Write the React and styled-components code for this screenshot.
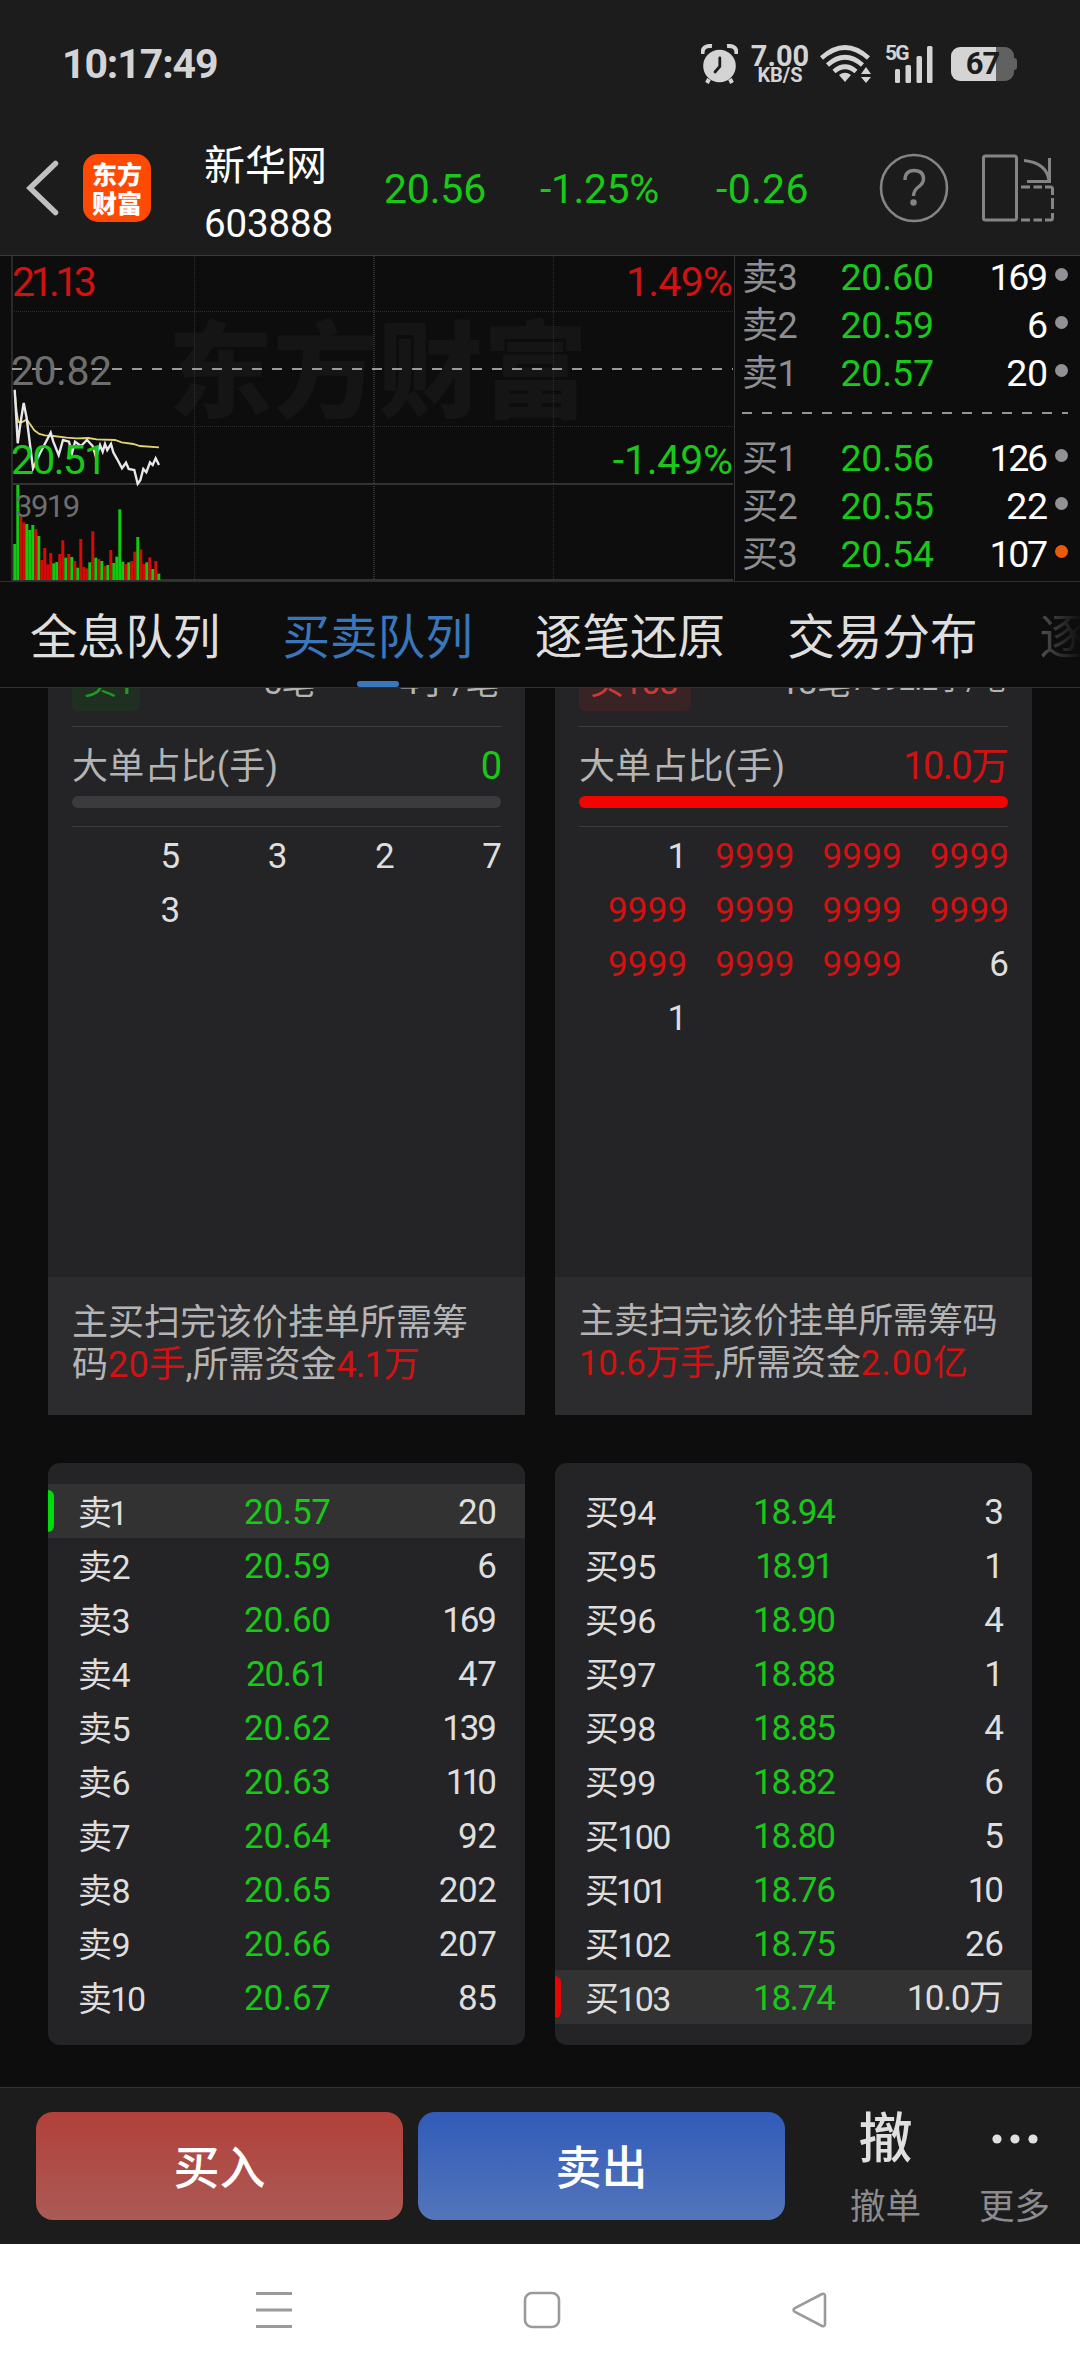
import React from "react";
import styled, { createGlobalStyle } from "styled-components";

const FONT = `Roboto, "Noto Sans CJK SC", sans-serif`;
const GREEN = "#19c819";
const RED = "#d01212";

const Global = createGlobalStyle`
  *, *::before, *::after { box-sizing: border-box; }
  html, body { margin: 0; padding: 0; background: #0d0d0d; }
  body { font-family: ${FONT}; color: #dedede; overflow: hidden; }
  #root { width: 1080px; }
`;

/* The narrow "1" of tabular figures is compensated by tighter tracking. */
const tracking = (text, size, extra = 0) => {
  const s = String(text);
  const ones = s.length > 1 ? (s.match(/1/g) || []).length : 0;
  return Number((-0.012 * size - (ones * size * 0.15) / s.length + extra).toFixed(2));
};

const NumText = styled.span`
  font-size: ${(p) => p.$size}px;
  line-height: 1.2;
  letter-spacing: ${(p) => p.$ls}px;
  margin-right: ${(p) => -p.$ls - 3}px;
  color: ${(p) => p.$color || "inherit"};
  white-space: nowrap;
`;
const Num = ({ size, color, extra, children }) => (
  <NumText $size={size} $color={color} $ls={tracking(children, size, extra)}>
    {children}
  </NumText>
);

const Screen = styled.div`
  width: 1080px;
  height: 2376px;
  display: flex;
  flex-direction: column;
  overflow: hidden;
  background: #0d0d0d;
`;

/* ---------- status bar ---------- */
const StatusBar = styled.div`
  height: 124px;
  flex: none;
  display: flex;
  align-items: center;
  justify-content: space-between;
  padding: 4px 66px 0 62px;
  background: #1c1c1c;
`;
const Clock = styled.div`
  font-size: 41px;
  line-height: 48px;
  font-weight: 700;
  letter-spacing: -1.1px;
  color: #d4d4d4;
`;
const StatusIcons = styled.div`
  display: flex;
  align-items: center;
  height: 40px;
`;
const Speed = styled.div`
  width: 58px;
  margin: 0 11px 0 13px;
  display: flex;
  flex-direction: column;
  align-items: center;
  color: #d4d4d4;
  font-weight: 700;
`;
const SpeedValue = styled.span`
  font-size: 29px;
  line-height: 22px;
`;
const SpeedUnit = styled.span`
  font-size: 20px;
  line-height: 16px;
`;
const Signal = styled.div`
  position: relative;
  width: 50px;
  height: 38px;
  margin: 0 16px 0 13px;
`;
const NetType = styled.span`
  position: absolute;
  left: 0;
  top: -1px;
  font-size: 21px;
  line-height: 18px;
  font-weight: 700;
  letter-spacing: -1.8px;
  color: #d4d4d4;
`;
const Battery = styled.div`
  width: 63px;
  height: 34px;
  border-radius: 9px;
  display: flex;
  align-items: center;
  justify-content: center;
  position: relative;
  background: linear-gradient(90deg, #d4d4d4 45px, #616161 45px);
  color: #1c1c1c;
  font-size: 31px;
  line-height: 34px;
  font-weight: 700;
  letter-spacing: -1px;
  &::after {
    content: "";
    position: absolute;
    right: -3px;
    top: 11px;
    width: 3px;
    height: 12px;
    border-radius: 0 3px 3px 0;
    background: #616161;
  }
`;

const AlarmIcon = () => (
  <svg width="37" height="40" viewBox="0 0 37 40">
    <path d="M1.5 10 Q1 1 11 2 M35.5 10 Q36 1 26 2" fill="none" stroke="#d4d4d4" strokeWidth="4" />
    <path d="M8 35 L6 39 M29 35 L31 39" stroke="#d4d4d4" strokeWidth="4" />
    <circle cx="18.5" cy="22" r="16.3" fill="#d4d4d4" />
    <path d="M18.8 14 V22.5 L14 28" fill="none" stroke="#1c1c1c" strokeWidth="2.8" strokeLinecap="round" />
  </svg>
);
const WifiIcon = () => (
  <svg width="52" height="38" viewBox="0 0 52 38">
    <g fill="none" stroke="#d4d4d4" strokeWidth="4.6">
      <path d="M1.5 13 Q25 -8 48.5 13" />
      <path d="M7.5 20 Q25 4.5 42.5 20" />
      <path d="M14 26.5 Q25 17 36 26.5" />
    </g>
    <path d="M19 30 Q25 25.5 31 30 L25 37 Z" fill="#d4d4d4" />
    <path d="M41 29 L46 22 L51 29 Z M41 32 L46 38 L51 32 Z" fill="#d4d4d4" />
  </svg>
);

/* ---------- stock header ---------- */
const Header = styled.header`
  height: 132px;
  flex: none;
  display: grid;
  grid-template-columns: 83px 121px 180px 156px 176px 163px 103px auto;
  align-items: center;
  background: #1c1c1c;
  border-bottom: 1px solid #393939;
`;
const HeaderIcon = styled.svg`
  display: block;
  margin-bottom: 4px;
`;
const Logo = styled.div`
  width: 68px;
  height: 68px;
  margin-bottom: 4px;
  border-radius: 15px;
  background: #ff4a05;
  display: flex;
  flex-direction: column;
  align-items: center;
  justify-content: center;
  color: #fff;
  font-family: "Noto Sans CJK SC", sans-serif;
  font-size: 25px;
  line-height: 29px;
  font-weight: 900;
`;
const StockName = styled.div`
  display: flex;
  flex-direction: column;
  gap: 6px;
  color: #fff;
  padding-top: 6px;
`;
const NameText = styled.span`
  font-size: 41px;
  line-height: 58px;
`;

/* ---------- chart and order book ---------- */
const Market = styled.section`
  height: 326px;
  flex: none;
  display: flex;
  border-bottom: 1px solid #2e2e2e;
`;
const ChartPane = styled.div`
  position: relative;
  width: 735px;
  border-right: 1px solid #333;
`;
const ChartLabel = styled.div`
  position: absolute;
  display: flex;
  top: ${(p) => p.$top}px;
  ${(p) => (p.$right != null ? `right: ${p.$right}px;` : `left: ${p.$left}px;`)}
`;
const ChartSvg = styled.svg`
  display: block;
`;

const BARS =
  "g897 g720 r815 r832 g837 g855 g840 r852 g873 r945 r909 r958 r924 g955 g951 r927 r886 g938 r927 g936 r948 g968 r882 r966 r970 g952 r859 g938 r942 g948 r963 g960 r915 g954 g935 g793 g950 r957 g952 r948 r920 g876 r913 r957 g952 r937 g972 r948 g986"
    .split(" ")
    .map((b) => ({ up: b[0] === "r", h: (1005 - Number(b.slice(1))) / 3 }));

const PRICE =
  "44,434 53,595 62,530 71,474 80,520 99,670 108,650 120,625 152,563 160,590 176,630 189,585 207,590 216,625 225,590 243,603 261,585 278,603 288,637 300,600 308,620 315,597 322,615 333,597 340,622 350,640 366,670 378,653 386,672 403,675 413,716 421,706 430,672 439,682 450,652 458,660 467,640 477,660";
const AVERAGE =
  "44,440 50,500 55,531 66,531 80,524 92,540 103,556 118,567 135,571 160,573 200,578 230,580 265,579 290,583 345,585 365,592 400,597 420,603 477,607";
const toPoints = (s) =>
  s
    .split(" ")
    .map((p) => p.split(",").map(Number))
    .map(([x, y]) => `${(x / 3).toFixed(1)},${(y / 3 - 11).toFixed(1)}`)
    .join(" ");

const Chart = () => (
  <ChartSvg width="734" height="325" viewBox="0 0 734 325">
    <text
      x="168"
      y="153"
      fontSize="105"
      fontWeight="900"
      fill="#151515"
      fontFamily="Noto Sans CJK SC"
    >
      东方财富
    </text>
    <g stroke="#303030" strokeWidth="1" strokeDasharray="1 1">
      <path d="M12 55.5 H733 M12 170.5 H733 M194.5 0 V324 M373.5 0 V324 M374.5 0 V324 M553.5 0 V324" />
    </g>
    <path d="M12 0 V325" stroke="#2a2a2a" strokeWidth="2" />
    <path d="M12 228 H733 M12 324 H733" stroke="#333" strokeWidth="2" />
    <path d="M12 113 H733" stroke="#9a9a9a" strokeWidth="2" strokeDasharray="10 10" />
    {BARS.map((b, i) => (
      <rect
        key={i}
        x={13.3 + i * 3}
        y={324 - b.h}
        width="3"
        height={b.h}
        fill={b.up ? "#d80a05" : "#10cc10"}
      />
    ))}
    <polyline points={toPoints(AVERAGE)} fill="none" stroke="#e3d36c" strokeWidth="1.8" />
    <polyline points={toPoints(PRICE)} fill="none" stroke="#e8e8e8" strokeWidth="2.4" />
  </ChartSvg>
);

const Book = styled.div`
  flex: 1;
  padding: 0 12px 0 7px;
  margin-top: -3px;
`;
const BookRow = styled.div`
  height: 48px;
  display: grid;
  grid-template-columns: 91px 98px 114px auto;
  align-items: center;
`;
const BookLabel = styled.span`
  font-size: 36px;
  line-height: 46px;
  padding-top: 1px;
  color: #8e8e93;
  letter-spacing: -0.6px;
`;
const Right = styled.div`
  display: flex;
  justify-content: flex-end;
`;
const Dot = styled.i`
  width: 13px;
  height: 13px;
  border-radius: 50%;
  margin: -5px 0 0 10px;
  background: ${(p) => (p.$hot ? "#e85a0c" : "#919196")};
`;
const BookDivider = styled.div`
  height: 2px;
  margin: 15px 0 20px;
  background: repeating-linear-gradient(90deg, #959595 0 10px, transparent 10px 20px);
`;

/* ---------- tabs ---------- */
const Tabs = styled.nav`
  height: 106px;
  flex: none;
  display: flex;
  gap: 62px;
  padding-left: 30px;
  overflow: hidden;
  background: #0d0d0d;
  border-bottom: 1px solid #303030;
`;
const Tab = styled.div`
  flex: none;
  display: flex;
  flex-direction: column;
  align-items: center;
  justify-content: space-between;
  padding-top: 23px;
  font-size: 47.6px;
  line-height: 66px;
  color: ${(p) => (p.$active ? "#3a76bb" : "#dedede")};
  ${(p) =>
    p.$faded &&
    `background: linear-gradient(90deg, #505050, #0d0d0d 42px);
     -webkit-background-clip: text; background-clip: text; color: transparent;`}
`;
const Underline = styled.i`
  width: 42px;
  height: 6px;
  border-radius: 3px;
  background: #3a76bb;
`;

/* ---------- queue panels ---------- */
const Panels = styled.main`
  flex: none;
  height: 1399px;
  padding: 0 48px;
  overflow: hidden;
`;
const Columns = styled.div`
  display: grid;
  grid-template-columns: 477px 477px;
  column-gap: 30px;
  margin-top: ${(p) => p.$mt || 0}px;
`;
const QueueCard = styled.article`
  height: 727px;
  display: flex;
  flex-direction: column;
  overflow: hidden;
  background: #242426;
`;
const QueueBody = styled.div`
  flex: 1;
  padding: 0 24px;
`;
const Summary = styled.div`
  height: 87px;
  margin-top: -48px;
  padding-right: 2px;
  display: flex;
  align-items: center;
  border-bottom: 1px solid #3c3c3e;
`;
const Tag = styled.span`
  flex: none;
  height: 54px;
  margin-top: 2px;
  padding: 0 0 0 11px;
  width: ${(p) => (p.$buy ? 112 : 68)}px;
  border-radius: 6px;
  font-size: 34px;
  line-height: 50px;
  letter-spacing: -0.8px;
  white-space: nowrap;
  background: ${(p) => (p.$buy ? "#3a2324" : "#1f2f22")};
  color: ${(p) => (p.$buy ? "#cc3a3a" : "#1f9a24")};
`;
const SummaryText = styled.span`
  font-size: 34px;
  line-height: 50px;
  margin-top: -3px;
  margin-left: ${(p) => p.$ml}px;
  letter-spacing: -0.5px;
  color: #b4b4b4;
  white-space: nowrap;
`;
const SummaryAverage = styled(SummaryText)`
  font-size: ${(p) => (p.$small ? 29 : 34)}px;
  margin-top: ${(p) => (p.$small ? -7 : -3)}px;
  margin-left: auto;
`;
const Ratio = styled.div`
  height: 100px;
  border-bottom: 1px solid #3c3c3e;
`;
const RatioHead = styled.div`
  height: 69px;
  padding: 11px 2px 0 0;
  display: flex;
  justify-content: space-between;
  align-items: center;
`;
const RatioLabel = styled.span`
  font-size: 36px;
  line-height: 50px;
  letter-spacing: 0.2px;
  color: #b4b4b4;
`;
const Bar = styled.div`
  height: 12px;
  border-radius: 6px;
  background: ${(p) => (p.$full ? "#f00500" : "#3b3b3d")};
`;
const Orders = styled.div`
  padding: 3px 2px 0 0;
  margin-left: -2px;
  display: grid;
  grid-template-columns: repeat(4, 1fr);
  grid-auto-rows: 54px;
  align-items: center;
`;
const Note = styled.footer`
  height: 138px;
  padding: ${(p) => (p.$compact ? 24 : 25)}px 24px 0;
  background: #2c2c2e;
  font-size: ${(p) => (p.$compact ? 34.9 : 36)}px;
  line-height: ${(p) => (p.$compact ? 41.5 : 42)}px;
  color: #b4b4b4;
  white-space: nowrap;
`;
const Hot = styled.span`
  color: ${RED};
  letter-spacing: ${(p) => p.$ls || 0}px;
`;

/* ---------- price ladders ---------- */
const Ladder = styled.article`
  height: 582px;
  padding: 21px 0;
  border-radius: 12px;
  background: #242426;
`;
const LadderRow = styled.div`
  position: relative;
  height: 54px;
  padding: 4px 31px 0 30px;
  display: grid;
  grid-template-columns: 1fr 1fr 1fr;
  align-items: center;
  background: ${(p) => (p.$mark ? "#323232" : "transparent")};
  ${(p) =>
    p.$mark &&
    `&::before {
      content: ""; position: absolute; left: 0; top: 6px; width: 6px; height: 42px;
      border-radius: 0 6px 6px 0; background: ${p.$mark};
    }`}
`;
const Center = styled.div`
  display: flex;
  justify-content: center;
`;

/* ---------- action bar ---------- */
const ActionBar = styled.div`
  height: 157px;
  flex: none;
  display: flex;
  padding: 24px 0 0 36px;
  background: #1c1c1c;
  border-top: 1px solid #333;
`;
const TradeButton = styled.button`
  width: 367px;
  height: 108px;
  margin: 0 15px 0 0;
  padding: 3px 0 0;
  border: 0;
  border-radius: 17px;
  font: 500 46px/66px ${FONT};
  color: #fff;
  background: ${(p) =>
    p.$sell
      ? "linear-gradient(#305bb8, #5475bb)"
      : "linear-gradient(#b2403a, #ab5a55)"};
`;
const Action = styled.div`
  width: 129px;
  margin-left: ${(p) => p.$ml || 0}px;
  display: flex;
  flex-direction: column;
  align-items: center;
`;
const ActionIcon = styled.div`
  height: 69px;
  display: flex;
  align-items: flex-start;
  font-size: 54px;
  line-height: 56px;
  font-weight: 500;
  color: #e0e0e0;
`;
const ActionLabel = styled.span`
  font-size: 35.5px;
  line-height: 52px;
  color: #8c8c90;
`;

const NavBar = styled.div`
  height: 132px;
  flex: none;
  display: flex;
  align-items: center;
  gap: 230px;
  padding-left: 255px;
  background: #fff;
`;

/* ---------- data ---------- */
const SELLS = [["卖3", "20.60", "169"], ["卖2", "20.59", "6"], ["卖1", "20.57", "20"]];
const BUYS = [["买1", "20.56", "126"], ["买2", "20.55", "22"], ["买3", "20.54", "107", true]];
const SELL_LADDER = [
  ["卖1", "20.57", "20", "#00dc0a"], ["卖2", "20.59", "6"], ["卖3", "20.60", "169"],
  ["卖4", "20.61", "47"], ["卖5", "20.62", "139"], ["卖6", "20.63", "110"],
  ["卖7", "20.64", "92"], ["卖8", "20.65", "202"], ["卖9", "20.66", "207"], ["卖10", "20.67", "85"],
];
const BUY_LADDER = [
  ["买94", "18.94", "3"], ["买95", "18.91", "1"], ["买96", "18.90", "4"],
  ["买97", "18.88", "1"], ["买98", "18.85", "4"], ["买99", "18.82", "6"],
  ["买100", "18.80", "5"], ["买101", "18.76", "10"], ["买102", "18.75", "26"],
  ["买103", "18.74", "10.0万", "#e60505"],
];
const BUY_ORDERS = ["1", ...Array(10).fill("9999"), "6", "1"];

const BookRows = ({ rows }) =>
  rows.map(([label, price, qty, hot]) => (
    <BookRow key={label}>
      <BookLabel>{label}</BookLabel>
      <Right><Num size={37.5} extra={0.3} color={GREEN}>{price}</Num></Right>
      <Right><Num size={37.5} color="#fff">{qty}</Num></Right>
      <Dot $hot={hot} />
    </BookRow>
  ));

const LadderCard = ({ rows }) => (
  <Ladder>
    {rows.map(([label, price, qty, mark]) => (
      <LadderRow key={label} $mark={mark}>
        <Num size={34}>{label}</Num>
        <Center><Num size={35} extra={0.2} color={GREEN}>{price}</Num></Center>
        <Right><Num size={35}>{qty}</Num></Right>
      </LadderRow>
    ))}
  </Ladder>
);

const OrderGrid = ({ values }) => (
  <Orders>
    {values.map((v, i) => (
      <Right key={i}>
        <Num size={35} extra={0.6} color={v === "9999" ? RED : undefined}>{v}</Num>
      </Right>
    ))}
  </Orders>
);

export default function App() {
  return (
    <Screen>
      <Global />
      <StatusBar>
        <Clock>10:17:49</Clock>
        <StatusIcons>
          <AlarmIcon />
          <Speed>
            <SpeedValue>7.00</SpeedValue>
            <SpeedUnit>KB/S</SpeedUnit>
          </Speed>
          <WifiIcon />
          <Signal>
            <NetType>5G</NetType>
            <svg width="50" height="38" viewBox="0 0 50 38">
              <g fill="#d4d4d4">
                <rect x="10" y="24" width="5" height="14" rx="1.5" />
                <rect x="20.5" y="20" width="5.5" height="18" rx="1.5" />
                <rect x="31.5" y="11" width="5.5" height="27" rx="1.5" />
                <rect x="42" y="1" width="5.5" height="37" rx="1.5" />
              </g>
            </svg>
          </Signal>
          <Battery>67</Battery>
        </StatusIcons>
      </StatusBar>

      <Header>
        <HeaderIcon width="83" height="60" viewBox="0 0 83 60">
          <path d="M55.5 5.5 L30 30 L55.5 54.5" fill="none" stroke="#c0c0c0" strokeWidth="5.5" strokeLinecap="round" />
        </HeaderIcon>
        <Logo>
          <span>东方</span>
          <span>财富</span>
        </Logo>
        <StockName>
          <NameText>新华网</NameText>
          <Num size={38.5} extra={0.3} color="#fff">603888</Num>
        </StockName>
        <Num size={41} extra={0.3} color={GREEN}>20.56</Num>
        <Num size={41} extra={1.1} color={GREEN}>-1.25%</Num>
        <Num size={41} extra={0.8} color={GREEN}>-0.26</Num>
        <HeaderIcon width="70" height="70" viewBox="0 0 70 70">
          <circle cx="35" cy="35" r="33" fill="none" stroke="#858585" strokeWidth="2.6" />
          <path
            d="M26 27 Q26 17.5 35 17.5 Q44.500 17.500 44.500 26 Q44.500 30 40 33.500 Q34.500 37.500 34.500 43"
            fill="none" stroke="#858585" strokeWidth="3.4"
          />
          <circle cx="34.5" cy="49.500" r="3.200" fill="#858585" />
        </HeaderIcon>
        <HeaderIcon width="75" height="68" viewBox="0 0 75 68">
          <g fill="none" stroke="#858585" strokeWidth="3">
            <rect x="1.500" y="2" width="33" height="64" rx="2" />
            <path d="M42 6.500 Q65 9 67 27 M67.500 4 V27.500 H45" />
            <path d="M39 33 H48 M51.500 33 H60 M63 33 H68.500 Q70.500 33 70.500 35 V41 M70.500 44 V55 M70.500 59 V64 Q70.500 66 68.500 66 H63 M60 66 H51.500 M48 66 H39" />
          </g>
        </HeaderIcon>
      </Header>

      <Market>
        <ChartPane>
          <Chart />
          <ChartLabel $top={2} $left={12}><Num size={41} extra={-1.6} color={RED}>21.13</Num></ChartLabel>
          <ChartLabel $top={91} $left={11}><Num size={41} color="#6e6e6e">20.82</Num></ChartLabel>
          <ChartLabel $top={180} $left={11}><Num size={41} color={GREEN}>20.51</Num></ChartLabel>
          <ChartLabel $top={232} $left={15}><Num size={31} color="#6e6e6e">3919</Num></ChartLabel>
          <ChartLabel $top={2} $right={4}><Num size={41} extra={1} color={RED}>1.49%</Num></ChartLabel>
          <ChartLabel $top={180} $right={4}><Num size={41} extra={1.3} color={GREEN}>-1.49%</Num></ChartLabel>
        </ChartPane>
        <Book>
          <BookRows rows={SELLS} />
          <BookDivider />
          <BookRows rows={BUYS} />
        </Book>
      </Market>

      <Tabs>
        <Tab>全息队列</Tab>
        <Tab $active>买卖队列<Underline /></Tab>
        <Tab>逐笔还原</Tab>
        <Tab>交易分布</Tab>
        <Tab $faded>逐</Tab>
      </Tabs>

      <Panels>
        <Columns>
          <QueueCard>
            <QueueBody>
              <Summary>
                <Tag>卖1</Tag>
                <SummaryText $ml={123}>5笔</SummaryText>
                <SummaryAverage>4手/笔</SummaryAverage>
              </Summary>
              <Ratio>
                <RatioHead>
                  <RatioLabel>大单占比(手)</RatioLabel>
                  <Num size={38} color={GREEN}>0</Num>
                </RatioHead>
                <Bar />
              </Ratio>
              <OrderGrid values={["5", "3", "2", "7", "3"]} />
            </QueueBody>
            <Note>
              主买扫完该价挂单所需筹<br />
              码<Hot $ls={0.3}>20手</Hot>,所需资金<Hot $ls={-0.9}>4.1万</Hot>
            </Note>
          </QueueCard>
          <QueueCard>
            <QueueBody>
              <Summary>
                <Tag $buy>买103</Tag>
                <SummaryText $ml={89}>13笔</SummaryText>
                <SummaryAverage $small>7692.2手/笔</SummaryAverage>
              </Summary>
              <Ratio>
                <RatioHead>
                  <RatioLabel>大单占比(手)</RatioLabel>
                  <Num size={38} color={RED}>10.0万</Num>
                </RatioHead>
                <Bar $full />
              </Ratio>
              <OrderGrid values={BUY_ORDERS} />
            </QueueBody>
            <Note $compact>
              主卖扫完该价挂单所需筹码<br />
              <Hot $ls={-0.4}>10.6万手</Hot>,所需资金<Hot $ls={1}>2.00亿</Hot>
            </Note>
          </QueueCard>
        </Columns>
        <Columns $mt={48}>
          <LadderCard rows={SELL_LADDER} />
          <LadderCard rows={BUY_LADDER} />
        </Columns>
      </Panels>

      <ActionBar>
        <TradeButton>买入</TradeButton>
        <TradeButton $sell>卖出</TradeButton>
        <Action $ml={21}>
          <ActionIcon>撤</ActionIcon>
          <ActionLabel>撤单</ActionLabel>
        </Action>
        <Action>
          <ActionIcon>
            <svg width="46" height="54" viewBox="0 0 46 54">
              <g fill="#e0e0e0">
                <circle cx="5" cy="27" r="4.600" />
                <circle cx="23" cy="27" r="4.600" />
                <circle cx="41" cy="27" r="4.600" />
              </g>
            </svg>
          </ActionIcon>
          <ActionLabel>更多</ActionLabel>
        </Action>
      </ActionBar>

      <NavBar>
        <svg width="38" height="38" viewBox="0 0 38 38">
          <path d="M1 2.500 H37 M1 19 H37 M1 35.500 H37" stroke="#9a9a9a" strokeWidth="3" />
        </svg>
        <svg width="38" height="38" viewBox="0 0 38 38">
          <rect x="2" y="2" width="34" height="34" rx="7" fill="none" stroke="#9a9a9a" strokeWidth="2.600" />
        </svg>
        <svg width="38" height="38" viewBox="0 0 38 38">
          <path
            d="M31 3 L4 17 Q1 19 4 21 L31 35 Q34 36 34 33 V5 Q34 2 31 3 Z"
            fill="none" stroke="#9a9a9a" strokeWidth="2.600"
          />
        </svg>
      </NavBar>
    </Screen>
  );
}
